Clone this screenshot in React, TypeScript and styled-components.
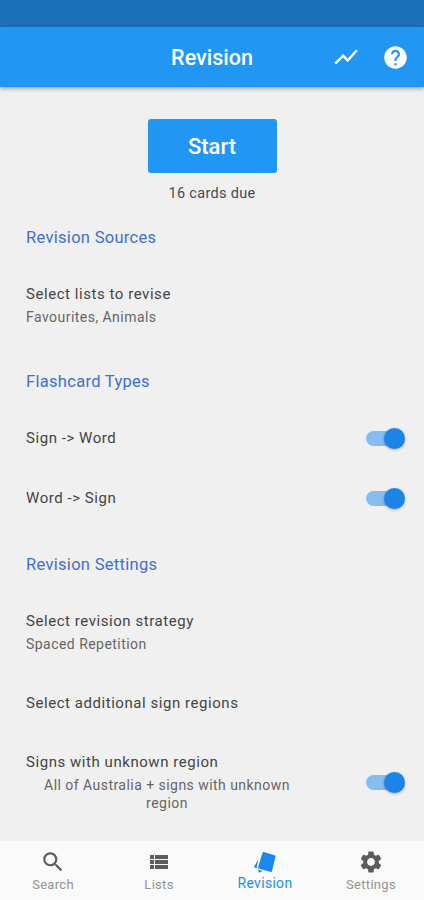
import { FC, ReactNode } from "react";
import styled, { createGlobalStyle } from "styled-components";
import { MdHelp, MdSearch, MdSettings, MdShowChart, MdViewList } from "react-icons/md";

const GlobalStyle = createGlobalStyle`
  html, body {
    margin: 0;
    padding: 0;
    background: #f0f0f0;
  }
  * {
    box-sizing: border-box;
  }
`;

const Screen = styled.div`
  width: 424px;
  height: 900px;
  display: flex;
  flex-direction: column;
  overflow: hidden;
  background: #f0f0f0;
  font-family: Roboto, "Liberation Sans", sans-serif;
`;

const StatusBar = styled.div`
  height: 27px;
  flex: none;
  background: #1a6fb6;
`;

const Header = styled.header`
  height: 60px;
  flex: none;
  display: grid;
  grid-template-columns: 1fr auto 1fr;
  align-items: center;
  background: #2196f3;
  box-shadow: 0 2px 4px rgba(0, 0, 0, 0.3);
  z-index: 1;
`;

const HeaderTitle = styled.h1`
  grid-column: 2;
  margin: 0;
  color: #fff;
  font-size: 21.5px;
  font-weight: 500;
`;

const HeaderActions = styled.div`
  grid-column: 3;
  display: flex;
  justify-content: flex-end;
  align-items: center;
  gap: 22px;
  padding-right: 15px;
  color: #fff;
`;

const Content = styled.main`
  flex: 1;
  min-height: 0;
  padding-top: 32px;
  display: flex;
  flex-direction: column;
`;

const StartBlock = styled.div`
  flex: none;
  display: flex;
  flex-direction: column;
  align-items: center;
`;

const StartButton = styled.button`
  width: 129px;
  height: 54px;
  border: 0;
  border-radius: 3px;
  background: #2196f3;
  color: #fff;
  font-family: inherit;
  font-size: 22px;
  font-weight: 500;
`;

const DueText = styled.div`
  margin-top: 12px;
  color: #4a4a4a;
  font-size: 14.5px;
  line-height: 18px;
  letter-spacing: 0.3px;
`;

const SectionTitle = styled.h2<{ $top: number }>`
  flex: none;
  margin: ${(p) => p.$top}px 0 16px 26px;
  color: #3f6fd0;
  font-size: 16.5px;
  font-weight: 400;
  line-height: 20px;
  letter-spacing: 0.3px;
`;

const Row = styled.div<{ $height: number }>`
  flex: none;
  height: ${(p) => p.$height}px;
  padding: 0 21px 0 26px;
  display: flex;
  align-items: center;
  justify-content: space-between;
`;

const RowText = styled.div`
  width: 282px;
  display: flex;
  flex-direction: column;
`;

const RowLabel = styled.div`
  color: #444;
  font-size: 15px;
  line-height: 20px;
  letter-spacing: 0.55px;
`;

const RowDetail = styled.div<{ $center?: boolean }>`
  margin-top: 4px;
  color: #666;
  font-size: 14px;
  line-height: 18px;
  letter-spacing: 0.46px;
  text-align: ${(p) => (p.$center ? "center" : "left")};
`;

const SwitchTrack = styled.div`
  position: relative;
  flex: none;
  width: 37px;
  height: 15px;
  border-radius: 8px;
  background: #85bdf0;
`;

const SwitchThumb = styled.div`
  position: absolute;
  right: -2px;
  top: -3px;
  width: 21px;
  height: 21px;
  border-radius: 50%;
  background: #1c84e6;
  box-shadow: 0 1px 3px rgba(0, 0, 0, 0.3);
`;

const BottomNav = styled.nav`
  height: 59px;
  flex: none;
  display: grid;
  grid-template-columns: repeat(4, 1fr);
  background: #fafafa;
`;

const NavItem = styled.div<{ $active?: boolean }>`
  display: flex;
  flex-direction: column;
  align-items: center;
  padding-top: 8px;
  color: ${(p) => (p.$active ? "#2a8cec" : "#939393")};
  font-size: ${(p) => (p.$active ? 14 : 13)}px;
  line-height: 16px;
  letter-spacing: 0.3px;
`;

const NavIcon = styled.div<{ $active?: boolean }>`
  height: 26px;
  margin-bottom: ${(p) => (p.$active ? 0 : 2)}px;
  display: flex;
  align-items: center;
  color: ${(p) => (p.$active ? "#1c88ee" : "#5c5c5c")};
`;

const CardsIcon: FC = () => (
  <svg width="26" height="26" viewBox="0 0 26 26" fill="currentColor">
    <path d="M10.6 3.6c.2-.6.7-.8 1.2-.7l11 3.3c.6.2.8.7.7 1.2l-3.5 14.9c-.2.6-.7.8-1.2.7l-12.1-3.5c-.5-.2-.8-.7-.6-1.2z" />
    <path d="M6.2 10.6 2.2 17.4c-.2.4-.1.8.3 1l2.1.8z" />
    <path d="M6 20.6l4.6 1.4-3 1.4c-.4.2-.8 0-1-.4z" />
  </svg>
);

const SettingRow: FC<{ label: string; detail?: string; center?: boolean; height: number; toggle?: boolean }> = ({
  label,
  detail,
  center,
  height,
  toggle,
}) => (
  <Row $height={height}>
    <RowText>
      <RowLabel>{label}</RowLabel>
      {detail && <RowDetail $center={center}>{detail}</RowDetail>}
    </RowText>
    {toggle && (
      <SwitchTrack>
        <SwitchThumb />
      </SwitchTrack>
    )}
  </Row>
);

const tabs: { label: string; icon: ReactNode; active?: boolean }[] = [
  { label: "Search", icon: <MdSearch size={26} /> },
  { label: "Lists", icon: <MdViewList size={24} /> },
  { label: "Revision", icon: <CardsIcon />, active: true },
  { label: "Settings", icon: <MdSettings size={26} /> },
];

export default function App() {
  return (
    <>
      <GlobalStyle />
      <Screen>
        <StatusBar />
        <Header>
          <HeaderTitle>Revision</HeaderTitle>
          <HeaderActions>
            <MdShowChart size={28} />
            <MdHelp size={27} />
          </HeaderActions>
        </Header>
        <Content>
          <StartBlock>
            <StartButton>Start</StartButton>
            <DueText>16 cards due</DueText>
          </StartBlock>
          <SectionTitle $top={25}>Revision Sources</SectionTitle>
          <SettingRow height={82} label="Select lists to revise" detail="Favourites, Animals" />
          <SectionTitle $top={26}>Flashcard Types</SectionTitle>
          <SettingRow height={60} label="Sign -> Word" toggle />
          <SettingRow height={60} label="Word -> Sign" toggle />
          <SectionTitle $top={27}>Revision Settings</SectionTitle>
          <SettingRow height={82} label="Select revision strategy" detail="Spaced Repetition" />
          <SettingRow height={60} label="Select additional sign regions" />
          <SettingRow
            height={98}
            label="Signs with unknown region"
            detail="All of Australia + signs with unknown region"
            center
            toggle
          />
        </Content>
        <BottomNav>
          {tabs.map((tab) => (
            <NavItem key={tab.label} $active={tab.active}>
              <NavIcon $active={tab.active}>{tab.icon}</NavIcon>
              {tab.label}
            </NavItem>
          ))}
        </BottomNav>
      </Screen>
    </>
  );
}
